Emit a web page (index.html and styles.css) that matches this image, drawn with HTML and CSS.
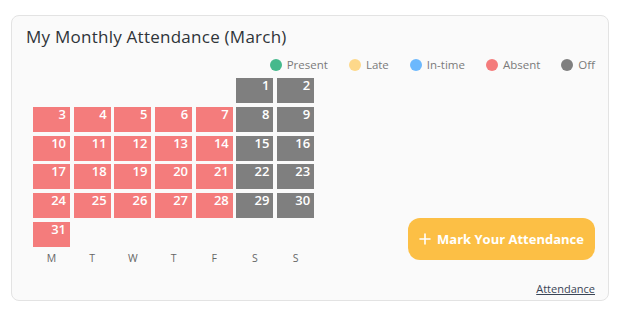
FILE: index.html
```html
<!DOCTYPE html>
<html lang="en">
<head>
<meta charset="utf-8">
<title>My Monthly Attendance</title>
<link rel="stylesheet" href="styles.css">
</head>
<body>
<div class="card">
  <h2 class="title">My Monthly Attendance (March)</h2>
  <ul class="legend">
    <li><span class="dot dot-present"></span>Present</li>
    <li><span class="dot dot-late"></span>Late</li>
    <li><span class="dot dot-intime"></span>In-time</li>
    <li><span class="dot dot-absent"></span>Absent</li>
    <li><span class="dot dot-off"></span>Off</li>
  </ul>
  <div class="main">
    <div class="calendar">
      <div class="days">
        <div class="day off start">1</div>
        <div class="day off">2</div>
        <div class="day absent">3</div>
        <div class="day absent">4</div>
        <div class="day absent">5</div>
        <div class="day absent">6</div>
        <div class="day absent">7</div>
        <div class="day off">8</div>
        <div class="day off">9</div>
        <div class="day absent">10</div>
        <div class="day absent">11</div>
        <div class="day absent">12</div>
        <div class="day absent">13</div>
        <div class="day absent">14</div>
        <div class="day off">15</div>
        <div class="day off">16</div>
        <div class="day absent">17</div>
        <div class="day absent">18</div>
        <div class="day absent">19</div>
        <div class="day absent">20</div>
        <div class="day absent">21</div>
        <div class="day off">22</div>
        <div class="day off">23</div>
        <div class="day absent">24</div>
        <div class="day absent">25</div>
        <div class="day absent">26</div>
        <div class="day absent">27</div>
        <div class="day absent">28</div>
        <div class="day off">29</div>
        <div class="day off">30</div>
        <div class="day absent">31</div>
      </div>
      <div class="weekdays">
        <span>M</span><span>T</span><span>W</span><span>T</span><span>F</span><span>S</span><span>S</span>
      </div>
    </div>
    <button class="mark-btn" type="button">
      <svg class="plus" width="12" height="12" viewBox="0 0 12 12" aria-hidden="true"><path d="M6 1v10M1 6h10" stroke="#fff" stroke-width="1.6" stroke-linecap="round" fill="none"/></svg>
      Mark Your Attendance
    </button>
  </div>
  <div class="footer"><a class="link" href="#">Attendance</a></div>
</div>
</body>
</html>
```

FILE: styles.css
```css
* { box-sizing: border-box; }
html, body { margin: 0; padding: 0; background: #ffffff; }
body { font-family: "Open Sans", "Noto Sans", sans-serif; }

.card {
  margin: 15px 10px 0 11px;
  height: 286px;
  border: 1px solid #e3e3e3;
  border-radius: 8px;
  background: #fafafa;
  padding: 9px 13px 0 14px;
}

.title {
  margin: 0;
  font-size: 17px;
  line-height: 24px;
  font-weight: 500;
  letter-spacing: 0.25px;
  color: #2f3439;
}

.legend {
  list-style: none;
  margin: 9px 0 0;
  padding: 0;
  display: flex;
  justify-content: flex-end;
  gap: 21px;
  font-size: 11.5px;
  line-height: 14px;
  color: #7a7a7a;
}
.legend li { display: flex; align-items: center; gap: 5px; }
.dot { width: 12px; height: 12px; border-radius: 50%; display: inline-block; }
.dot-present { background: #45b98c; }
.dot-late { background: #fdd88a; }
.dot-intime { background: #6cb8fd; }
.dot-absent { background: #f47c7c; }
.dot-off { background: #7f7f7f; }

.main {
  display: flex;
  justify-content: space-between;
  align-items: flex-end;
  padding-left: 7px;
}

.days {
  margin-top: 6px;
  display: grid;
  grid-template-columns: repeat(7, 37px);
  grid-auto-rows: 25px;
  column-gap: 3.7px;
  row-gap: 3.8px;
}
.day {
  color: #fff;
  font-size: 13px;
  font-weight: 600;
  line-height: 15px;
  text-align: right;
  padding-right: 4px;
}
.day.start { grid-column-start: 6; }
.absent { background: #f47c7c; }
.off { background: #7f7f7f; }

.weekdays {
  margin-top: 4px;
  display: grid;
  grid-template-columns: repeat(7, 37px);
  column-gap: 3.7px;
  font-size: 10.5px;
  line-height: 14px;
  color: #666;
  text-align: center;
}

.mark-btn {
  margin-bottom: 5px;
  width: 187px;
  height: 42px;
  border: 0;
  border-radius: 12px;
  background: #fcbf45;
  color: #fff;
  font-family: inherit;
  font-size: 13px;
  font-weight: 700;
  display: flex;
  align-items: center;
  justify-content: center;
  gap: 6px;
  padding: 0;
}

.footer {
  margin-top: 15px;
  text-align: right;
  line-height: 14px;
}
.link {
  font-size: 11px;
  color: #3a4556;
  text-decoration: underline;
}
```
